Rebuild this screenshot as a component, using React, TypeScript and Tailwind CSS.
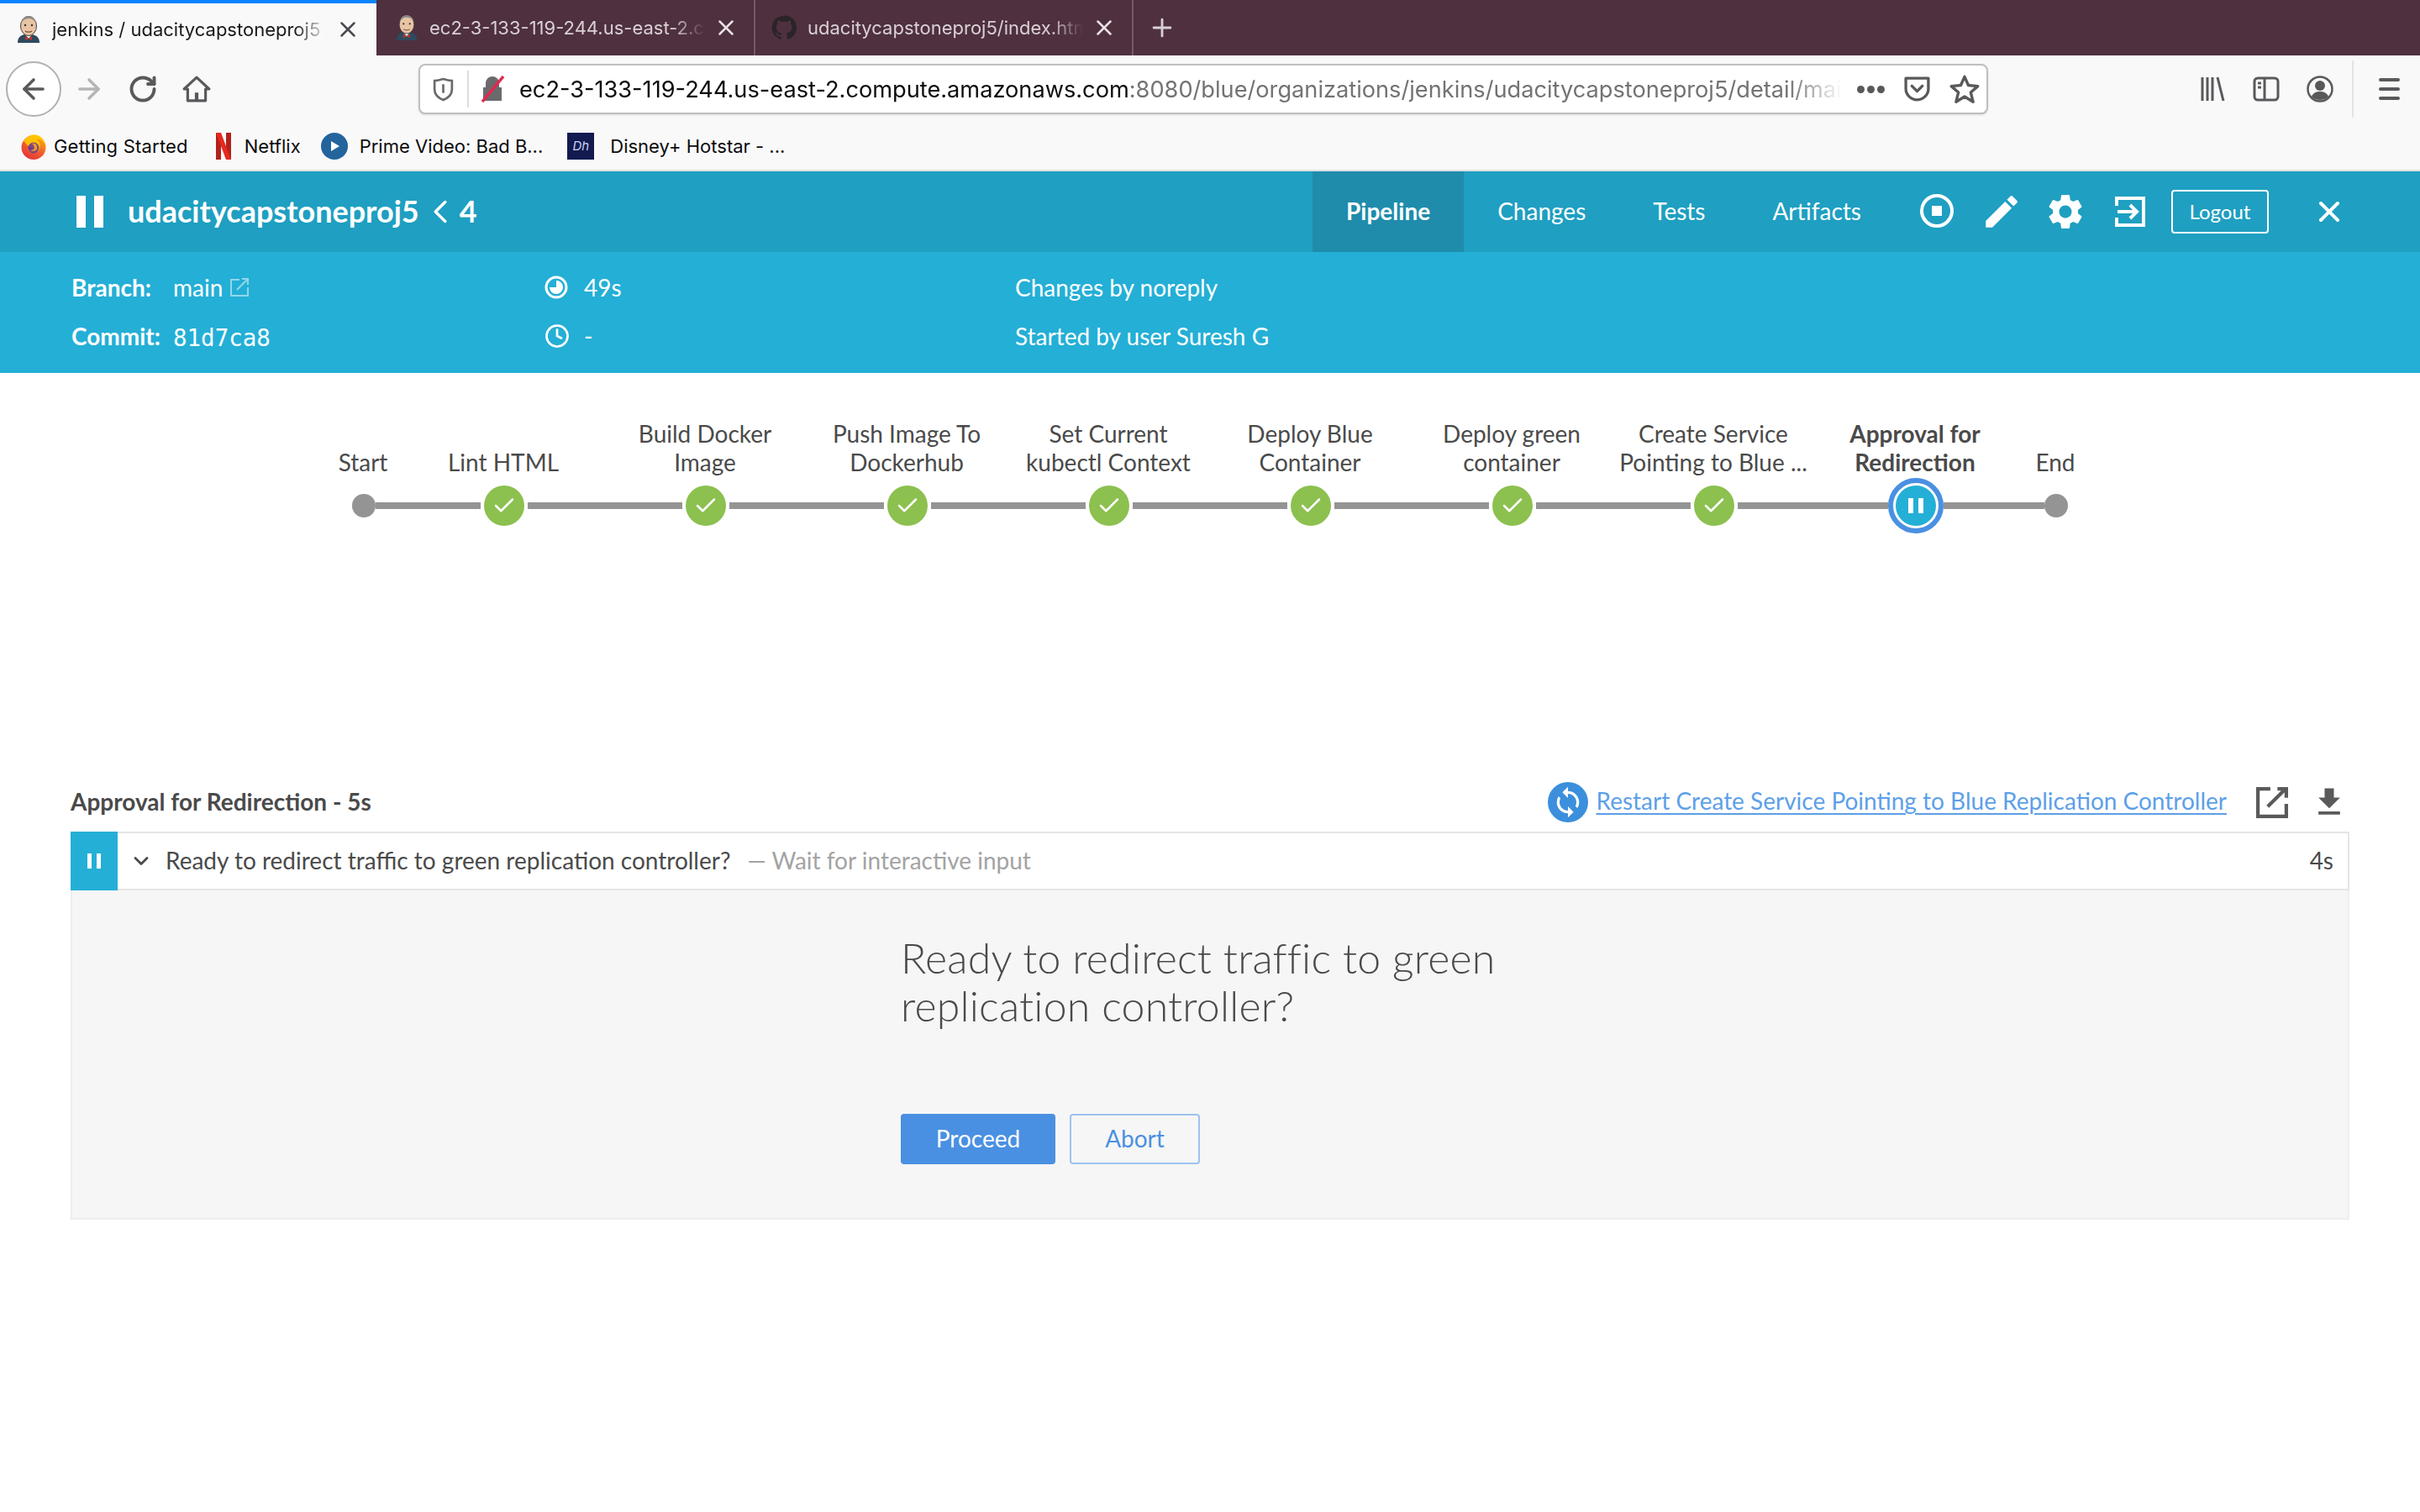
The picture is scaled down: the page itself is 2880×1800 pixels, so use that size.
import { Check, Clock, Plus, X, ChevronDown, ChevronLeft, ArrowLeft, ArrowRight, RotateCw } from "lucide-react";
import { MdEdit, MdSettings, MdFileDownload, MdSync } from "react-icons/md";

const uiFont = "font-[family-name:'Inter'] ";

function JenkinsIcon({ className }: { className?: string }) {
  return (
    <svg viewBox="0 0 30 32" className={className}>
      <path d="M2 32c0-6 3-9 8-10h9c6 1 9 4 9 10z" fill="#2f4a5e" />
      <path d="M11 22l4 5 4-5z" fill="#f4f0e8" />
      <path d="M11 24l4 3 4-3v5l-4-2-4 2z" fill="#c8332b" />
      <ellipse cx="15" cy="12" rx="9.5" ry="11.5" fill="#e8c4a4" stroke="#4a4040" strokeWidth="1" />
      <path d="M6 9c1-6 5-9 9-9s8 3 9 8c-2-3-5-5-9-5S8 5 6 9z" fill="#8e8a86" />
      <circle cx="11" cy="11" r="1.2" fill="#333" />
      <circle cx="19" cy="11" r="1.2" fill="#333" />
      <path d="M11 18c2 1.5 6 1.5 8 0" stroke="#7a4b3a" strokeWidth="1.2" fill="none" />
    </svg>
  );
}

function GithubIcon({ className }: { className?: string }) {
  return (
    <svg viewBox="0 0 24 24" className={className} fill="#2a2428">
      <path d="M12 .5a11.5 11.5 0 0 0-3.6 22.4c.6.1.8-.3.8-.6v-2c-3.2.7-3.9-1.5-3.9-1.5-.5-1.3-1.3-1.7-1.3-1.7-1-.7.1-.7.1-.7 1.2.1 1.8 1.2 1.8 1.2 1 1.8 2.7 1.3 3.4 1 .1-.8.4-1.3.7-1.6-2.6-.3-5.3-1.3-5.3-5.7 0-1.3.5-2.3 1.2-3.1-.1-.3-.5-1.5.1-3.1 0 0 1-.3 3.2 1.2a11 11 0 0 1 5.8 0c2.2-1.5 3.2-1.2 3.2-1.2.6 1.6.2 2.8.1 3.1.7.8 1.2 1.9 1.2 3.1 0 4.4-2.7 5.4-5.3 5.7.4.4.8 1.1.8 2.2v3.2c0 .3.2.7.8.6A11.5 11.5 0 0 0 12 .5z" />
    </svg>
  );
}

function BrowserTab({ icon, title, active, width }: { icon: React.ReactNode; title: string; active?: boolean; width: string }) {
  return (
    <div className={`${width} h-full flex items-center shrink-0 relative ${active ? "bg-[#f9f9fa] border-t-4 border-[#0a84ff] text-[#1a1a1a]" : "border-r-2 border-[#735a66] text-[#d9d0d5]"}`}>
      {icon}
      <div className="w-[328px] ml-[13px] overflow-hidden whitespace-nowrap text-[22px] [mask-image:linear-gradient(to_right,black_88%,transparent)]">{title}</div>
      <X className={`absolute w-[30px] h-[30px] ${active ? "right-[19px] text-[#4a4a4f]" : "right-[18px] text-[#e8e2e5]"}`} strokeWidth={2} />
    </div>
  );
}

function BrowserChrome() {
  return (
    <div className={uiFont + "bg-[#f9f9fa]"}>
      <div className="h-[66px] bg-[#4f303f] flex items-center">
        <BrowserTab active width="w-[448px] pl-[19px]" title="jenkins / udacitycapstoneproj5 /" icon={<JenkinsIcon className="w-[30px] h-[32px] shrink-0" />} />
        <BrowserTab width="w-[451px] pl-[22px]" title="ec2-3-133-119-244.us-east-2.compute" icon={<JenkinsIcon className="w-[28px] h-[32px] shrink-0" />} />
        <BrowserTab width="w-[450px] pl-[19px]" title="udacitycapstoneproj5/index.html" icon={<GithubIcon className="w-[30px] h-[30px] shrink-0" />} />
        <Plus className="ml-[17px] w-[34px] h-[34px] text-[#d9d0d5]" strokeWidth={2} />
      </div>
      <div className="h-[80px] flex items-center relative pl-[7px] text-[#59595c]">
        <div className="w-[66px] h-[66px] rounded-full bg-white border-2 border-[#b1b1b3] flex items-center justify-center shrink-0">
          <ArrowLeft className="w-[38px] h-[38px]" strokeWidth={2.2} />
        </div>
        <ArrowRight className="ml-[14px] w-[38px] h-[38px] text-[#b5b5b7] shrink-0" strokeWidth={2.2} />
        <RotateCw className="ml-[27px] w-[36px] h-[36px] shrink-0" strokeWidth={2.6} />
        <svg viewBox="0 0 32 32" className="ml-[29px] w-[34px] h-[34px] shrink-0" fill="none" stroke="#59595c" strokeWidth="3" strokeLinejoin="round">
          <path d="M2 16 16 3l14 13h-4v13H6V16z" />
          <rect x="14" y="20" width="4" height="9" fill="#59595c" stroke="none" />
        </svg>
        <div className="ml-[247px] w-[1868px] h-[60px] shrink-0 bg-white rounded-lg border-2 border-[#bfbfbf] flex items-center shadow-sm relative">
          <svg viewBox="0 0 24 28" className="ml-[15px] w-[25px] h-[29px] shrink-0" fill="none" stroke="#6a6a6d" strokeWidth="2.6">
            <path d="M2 4c3 0 7-1 10-2 3 1 7 2 10 2v10c0 6-5 10-10 12C7 24 2 20 2 14z" />
            <path d="M12 8v10" />
          </svg>
          <div className="ml-[16px] w-[2px] h-[44px] bg-[#dcdcdc] shrink-0" />
          <svg viewBox="0 0 28 32" className="ml-[14px] w-[28px] h-[32px] shrink-0">
            <path d="M6 14V9a8 8 0 0 1 16 0v5h3v16H3V14z" fill="#6a6a6d" />
            <path d="M27 1 2 31" stroke="#e22850" strokeWidth="3.5" />
          </svg>
          <div className="ml-[18px] w-[1574px] pt-[2px] overflow-hidden whitespace-nowrap text-[27.200px] text-[#0c0c0d] [mask-image:linear-gradient(to_right,black_96%,transparent)]">
            ec2-3-133-119-244.us-east-2.compute.amazonaws.com<span className="text-[#737373]">:8080/blue/organizations/jenkins/udacitycapstoneproj5/detail/main/4/pipeline</span>
          </div>
          <div className="ml-[18px] flex gap-[3px] shrink-0">
            {[0, 1, 2].map((i) => (
              <span key={i} className="w-[9px] h-[9px] rounded-full bg-[#59595c]" />
            ))}
          </div>
          <svg viewBox="0 0 32 32" className="ml-[22px] w-[33px] h-[33px] shrink-0" fill="none" stroke="#59595c" strokeWidth="3.2" strokeLinecap="round" strokeLinejoin="round">
            <path d="M3 3h26v12a13 13 0 0 1-26 0z" />
            <path d="m10 12 6 6 6-6" />
          </svg>
          <svg viewBox="0 0 32 32" className="ml-[22px] w-[36px] h-[36px] shrink-0" fill="none" stroke="#59595c" strokeWidth="3" strokeLinejoin="round">
            <path d="m16 3 4 9 10 1-7.500 6.500 2.500 10-9-5.500-9 5.500 2.500-10L2 13l10-1z" />
          </svg>
        </div>
        <div className="ml-[251px] flex items-center shrink-0">
          <svg viewBox="0 0 30 32" className="w-[32px] h-[32px]" fill="none" stroke="#59595c" strokeWidth="3">
            <path d="M3 2v28M9 2v28M15 2v28M21 2l7 28" />
          </svg>
          <svg viewBox="0 0 32 32" className="ml-[32px] w-[32px] h-[32px]" fill="none" stroke="#59595c" strokeWidth="3">
            <rect x="2" y="3" width="28" height="26" rx="4" />
            <path d="M14 3v26" />
            <path d="M6 9h4M6 14h4" />
          </svg>
          <svg viewBox="0 0 32 32" className="ml-[32px] w-[32px] h-[32px]">
            <circle cx="16" cy="16" r="14.500" fill="none" stroke="#59595c" strokeWidth="2.500" />
            <circle cx="16" cy="12" r="6" fill="#59595c" />
            <path d="M6 25c2-5 6-6 10-6s8 1 10 6c-3 3-7 4-10 4s-7-1-10-4z" fill="#59595c" />
          </svg>
          <div className="ml-[22px] w-[2px] h-[68px] bg-[#e3e3e4]" />
          <div className="ml-[30px] flex flex-col gap-[7px]">
            <span className="w-[25px] h-[4px] rounded-full bg-[#59595c]" />
            <span className="w-[25px] h-[4px] rounded-full bg-[#59595c]" />
            <span className="w-[25px] h-[4px] rounded-full bg-[#59595c]" />
          </div>
        </div>
      </div>
      <div className="h-[58px] flex items-center pl-[25px] text-[22px] text-[#0c0c0d] border-b-2 border-[#e0e0e0]">
        <svg viewBox="0 0 30 32" className="w-[30px] h-[32px] shrink-0">
          <defs>
            <linearGradient id="fxBody" x1="0.8" y1="0" x2="0.2" y2="1">
              <stop offset="0" stopColor="#ffb300" />
              <stop offset="0.5" stopColor="#f2602a" />
              <stop offset="1" stopColor="#e0313f" />
            </linearGradient>
          </defs>
          <circle cx="15" cy="17.500" r="14.500" fill="url(#fxBody)" />
          <path d="M3 9c2-1 4-4 8-6 6-2 13 0 16 6 1 2 1 3 1 4-2-3-5-6-9-5 3 2 4 5 4 8 0 5-4 8-8 8-3 0-6-2-7-5 2 2 5 2 7 1-2-1-3-2-3-3-3 0-6-3-9-8z" fill="#ffcb00" opacity="0.85" />
          <circle cx="15" cy="18" r="6.500" fill="#5a2ca0" opacity="0.8" />
          <path d="M13 13c4-1 7 2 6 6-1 3-5 4-8 2 3 0 5-1 5-3 0-2-1-4-3-5z" fill="#ff9a1f" />
        </svg>
        <span className="ml-[9px] tracking-[0.2px]">Getting Started</span>
        <svg viewBox="0 0 18 32" className="ml-[33px] w-[18px] h-[32px] shrink-0">
          <rect width="6" height="32" fill="#b1221b" />
          <rect x="12" width="6" height="32" fill="#b1221b" />
          <path d="M0 0h6l12 32h-6z" fill="#e32a1f" />
        </svg>
        <span className="ml-[16px]">Netflix</span>
        <svg viewBox="0 0 32 32" className="ml-[24px] w-[32px] h-[32px] shrink-0">
          <circle cx="16" cy="16" r="16" fill="#23649c" />
          <path d="m12 10 10 6-10 6z" fill="#fff" />
        </svg>
        <span className="ml-[14px]">Prime Video: Bad B...</span>
        <div className="ml-[29px] w-[32px] h-[32px] bg-[#131a50] text-[#c5d4f0] flex items-center justify-center text-[15px] italic shrink-0">Dh</div>
        <span className="ml-[19px]">Disney+ Hotstar - ...</span>
      </div>
    </div>
  );
}

function NavLink({ label, active }: { label: string; active?: boolean }) {
  return (
    <div className={`h-full flex items-center pb-[3px] ${active ? "bg-[#1f8cac] font-bold px-[40px]" : "px-[40px]"}`}>{label}</div>
  );
}

function PipelineHeader() {
  return (
    <div className="text-white">
      <div className="h-[96px] bg-[#1f9fc1] flex items-center pl-[91px]">
        <div className="flex gap-[10px] shrink-0">
          <span className="w-[11px] h-[38px] bg-white" />
          <span className="w-[11px] h-[38px] bg-white" />
        </div>
        <span className="ml-[29px] pb-[2px] text-[36px] font-bold">udacitycapstoneproj5</span>
        <ChevronLeft className="ml-[2px] w-[46px] h-[46px]" strokeWidth={1.8} />
        <span className="pb-[2px] text-[36px] font-bold">4</span>
        <div className="ml-auto h-full flex items-center text-[28px]">
          <NavLink label="Pipeline" active />
          <NavLink label="Changes" />
          <NavLink label="Tests" />
          <NavLink label="Artifacts" />
          <div className="ml-[30px] mb-[3px] w-[40px] h-[40px] rounded-full border-[4px] border-white flex items-center justify-center shrink-0">
            <span className="w-[12px] h-[12px] bg-white" />
          </div>
          <MdEdit className="ml-[32px] w-[50px] h-[50px] shrink-0" />
          <MdSettings className="ml-[26px] w-[50px] h-[50px] shrink-0" />
          <svg viewBox="0 0 36 36" className="ml-[34px] w-[36px] h-[36px] shrink-0" fill="none" stroke="#fff" strokeWidth="4">
            <path d="M2 11V2h32v32H2v-9" />
            <path d="M3 18h22M18 10l8 8-8 8" />
          </svg>
          <div className="ml-[31px] w-[116px] h-[52px] rounded-[4px] border-2 border-white flex items-center justify-center text-[24px] shrink-0">Logout</div>
          <X className="ml-[52px] mr-[88px] w-[40px] h-[40px] shrink-0" strokeWidth={2.4} />
        </div>
      </div>
      <div className="h-[144px] bg-[#24afd6] pt-[13px] pl-[85px] text-[28px]">
        <div className="h-[58px] flex items-center">
          <div className="w-[563px] flex items-center">
            <span className="w-[121px] font-bold">Branch:</span>
            <span>main</span>
            <svg viewBox="0 0 24 24" className="ml-[8px] w-[24px] h-[24px] opacity-50" fill="none" stroke="#fff" strokeWidth="2">
              <path d="M12 3H2v19h20V12M9 15 22 2M15 2h7v7" />
            </svg>
          </div>
          <div className="w-[560px] flex items-center">
            <svg viewBox="0 0 28 28" className="w-[28px] h-[28px]">
              <circle cx="14" cy="14" r="12" fill="none" stroke="#fff" strokeWidth="3" />
              <path d="M14 6a8 8 0 1 1-8 8h8z" fill="#fff" />
            </svg>
            <span className="ml-[19px]">49s</span>
          </div>
          <span>Changes by noreply</span>
        </div>
        <div className="h-[58px] flex items-center">
          <div className="w-[563px] flex items-center">
            <span className="w-[121px] font-bold">Commit:</span>
            <span className="mt-[6px] font-[family-name:'DejaVu_Sans_Mono'] text-[27.500px]">81d7ca8</span>
          </div>
          <div className="w-[560px] flex items-center">
            <Clock className="w-[30px] h-[30px]" strokeWidth={2.2} />
            <span className="ml-[17px]">-</span>
          </div>
          <span>Started by user Suresh G</span>
        </div>
      </div>
    </div>
  );
}

const stages = [
  "Lint HTML",
  "Build Docker\nImage",
  "Push Image To\nDockerhub",
  "Set Current\nkubectl Context",
  "Deploy Blue\nContainer",
  "Deploy green\ncontainer",
  "Create Service\nPointing to Blue ...",
];

function Segment({ hidden }: { hidden?: boolean }) {
  return <div className={`flex-1 h-[8px] ${hidden ? "" : "bg-[#949494]"}`} />;
}

function StageColumn({ label, width, bold, first, last, children }: { label: string; width: string; bold?: boolean; first?: boolean; last?: boolean; children: React.ReactNode }) {
  return (
    <div className={`${width} shrink-0 flex flex-col items-center`}>
      <div className={`h-[68px] w-[240px] -mx-[73px] pb-[2px] pr-[2px] flex items-end justify-center text-center leading-[34px] text-[28px] text-[#4a4a4a] whitespace-pre-line ${bold ? "font-bold" : ""}`}>
        <span>{label}</span>
      </div>
      <div className="h-[66px] w-full flex items-center">
        <Segment hidden={first} />
        {children}
        <Segment hidden={last} />
      </div>
    </div>
  );
}

function PipelineGraph() {
  return (
    <div className="pt-[57px] flex justify-center">
      <StageColumn label="Start" width="w-[94px]" first>
        <span className="w-[28px] h-[28px] rounded-full bg-[#949494] shrink-0" />
      </StageColumn>
      {stages.map((s) => (
        <StageColumn key={s} label={s} width="w-[240px]">
          <span className="mx-[4px] w-[48px] h-[48px] rounded-full bg-[#8cc04f] flex items-center justify-center shrink-0">
            <Check className="w-[30px] h-[30px] text-white" strokeWidth={2} />
          </span>
        </StageColumn>
      ))}
      <StageColumn label={"Approval for\nRedirection"} width="w-[240px]" bold>
        <span className="w-[66px] h-[66px] rounded-full bg-white border-[6px] border-[#4a90e2] flex items-center justify-center shrink-0">
          <span className="w-[48px] h-[48px] rounded-full bg-[#24afd6] flex items-center justify-center gap-[6px]">
            <span className="w-[6px] h-[18px] bg-white" />
            <span className="w-[6px] h-[18px] bg-white" />
          </span>
        </span>
      </StageColumn>
      <StageColumn label="End" width="w-[94px]" last>
        <span className="w-[28px] h-[28px] rounded-full bg-[#949494] shrink-0" />
      </StageColumn>
    </div>
  );
}

function StepDetail() {
  return (
    <div className="mx-[84px] mt-[287px] text-[#4a4a4a] text-[28px]">
      <div className="h-[68px] pb-[2px] flex items-center">
        <span className="pb-[2px] font-bold">Approval for Redirection - 5s</span>
        <div className="ml-auto flex items-center">
          <span className="w-[48px] h-[48px] rounded-full bg-[#3b8fdc] flex items-center justify-center shrink-0">
            <MdSync className="w-[40px] h-[40px] text-white" />
          </span>
          <span className="ml-[10px] mb-[4px] text-[#5d9fe8] underline underline-offset-[4px] decoration-2">Restart Create Service Pointing to Blue Replication Controller</span>
          <svg viewBox="0 0 36 36" className="ml-[35px] w-[38px] h-[38px] shrink-0" fill="none" stroke="#5a5a5a" strokeWidth="4">
            <path d="M16 3H2v31h32V20M13 23 33 3M24 3h10v10" />
          </svg>
          <MdFileDownload className="ml-[27px] mr-[2px] w-[44px] h-[44px] text-[#5a5a5a] shrink-0" />
        </div>
      </div>
      <div className="h-[70px] flex items-center border-y-2 border-r-2 border-[#e5e5e5] relative">
        <div className="w-[56px] h-[70px] -my-[2px] bg-[#24afd6] flex items-center justify-center gap-[6px] shrink-0">
          <span className="w-[5px] h-[18px] bg-white" />
          <span className="w-[5px] h-[18px] bg-white" />
        </div>
        <ChevronDown className="ml-[14px] w-[28px] h-[28px] shrink-0" strokeWidth={2.4} />
        <span className="ml-[15px] pb-[2px]">Ready to redirect traffic to green replication controller?</span>
        <span className="ml-[20px] pb-[2px] text-[#a3a3a3]">— Wait for interactive input</span>
        <span className="ml-auto mr-[17px] pb-[2px]">4s</span>
      </div>
      <div className="h-[392px] bg-[#f6f6f6] border-x-2 border-b-2 border-[#eeeeee] pt-[52px] pl-[986px]">
        <h2 className="w-[760px] text-[50px] leading-[57px] font-light tracking-[0.2px]">Ready to redirect traffic to green replication controller?</h2>
        <div className="mt-[100px] flex gap-[17px]">
          <div className="w-[184px] h-[60px] pb-[2px] rounded-[4px] bg-[#4a90e2] text-white flex items-center justify-center">Proceed</div>
          <div className="w-[155px] h-[60px] pb-[2px] rounded-[4px] border-2 border-[#9cc3ef] text-[#4a90e2] flex items-center justify-center">Abort</div>
        </div>
      </div>
    </div>
  );
}

export default function App() {
  return (
    <div className="w-[2880px] h-[1800px] bg-white overflow-hidden font-[family-name:'Lato'] ">
      <BrowserChrome />
      <PipelineHeader />
      <PipelineGraph />
      <StepDetail />
    </div>
  );
}
